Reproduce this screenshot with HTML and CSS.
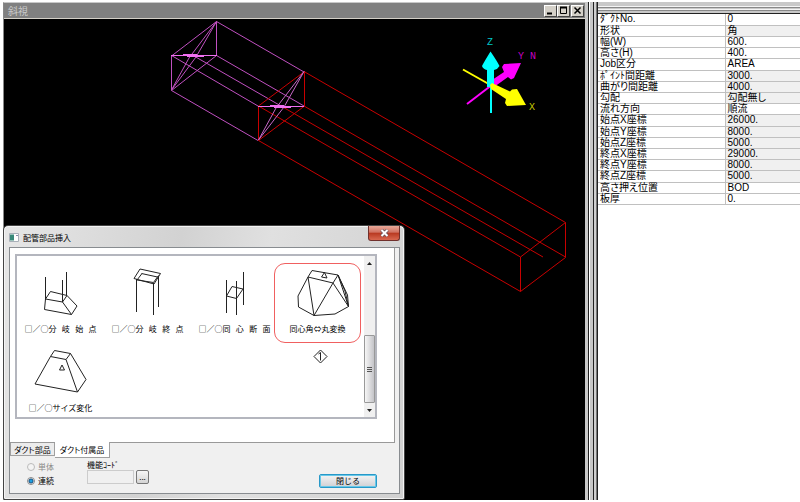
FILE: index.html
```html
<!DOCTYPE html>
<html lang="ja">
<head>
<meta charset="utf-8">
<title>斜視</title>
<link rel="stylesheet" href="styles.css">
</head>
<body>
<main class="workspace">
  <section class="view">
    <header class="view-bar">
      <h1 class="view-title">斜視</h1>
      <div class="view-buttons">
        <button class="win-button" type="button" aria-label="最小化"><svg width="9" height="9" viewBox="0 0 9 9"><path d="M1 7.500h5" stroke="#000" stroke-width="2"/></svg></button>
        <button class="win-button" type="button" aria-label="最大化"><svg width="9" height="9" viewBox="0 0 9 9"><path d="M1.500 1v6.500h6V1" fill="none" stroke="#000"/><path d="M1 1.500h7" stroke="#000" stroke-width="2"/></svg></button>
        <button class="win-button win-close" type="button" aria-label="閉じる"><svg width="9" height="9" viewBox="0 0 9 9"><path d="M1.500 1.500l6 6M7.500 1.500l-6 6" stroke="#000" stroke-width="1.500"/></svg></button>
      </div>
    </header>
    <div class="canvas">
      <svg class="scene" width="580" height="300" viewBox="4 19 580 300">
        <g fill="none" stroke="#c050c0">
          <path d="M171.500 90.500V56L216.500 21.500V55.500L171.500 90.500L258 140.500"/>
          <path d="M171.500 55.500L258 106M216.500 21.500L304 72M216.500 55.500L304 106M194 56L281 106"/>
          <path d="M171.500 90L189 58L216.500 21.500L196 57Z"/>
        </g>
        <g fill="none" stroke="#c80000">
          <path d="M258.500 140.500V106L304.500 71.500V106L258.500 140.500L520.500 291.500"/>
          <path d="M304 71.500L565.500 222.500M304 106L565.500 257M258.500 106L520.500 257M281 106L543 257"/>
          <path d="M520.500 291.500V257L565.500 222.500V257.500Z"/>
        </g>
        <path d="M258.500 140L276 108L304 71.500L284 107Z" fill="none" stroke="#c868c8"/>
        <g stroke="#f070f0" fill="none">
          <path d="M171 55.500H217M183 54.500h14M187 56.500h17"/>
          <path d="M258 106.500H304M270 105.500h14M274 107.500h17"/>
        </g>
        <g stroke-width="2">
          <path d="M490.500 86L467 104" stroke="#f0f"/>
          <path d="M491 86V113" stroke="#0ff"/>
          <path d="M490.500 85L463 69.500" stroke="#ff0"/>
        </g>
        <path d="M489 82L504 72L502 67L504 64L521 63L514 78L511 79.500L508 77L494 87Z" fill="#f0f"/>
        <path d="M487 87V70Q483 69 482 66Q484 62 490.500 51.500Q497 61 499.500 66Q498 69 494 70V87Z" fill="#0ff"/>
        <path d="M490 85L492 83L510 91.500L512 89.500L517 89L526 105L507 106L505 103L506 99L491 89Z" fill="#ff0"/>
        <g class="axis-text">
          <text x="487" y="45" fill="#00c8c8">Z</text>
          <text x="518" y="59" fill="#c800c8">Y N</text>
          <text x="529" y="110" fill="#c8c800">X</text>
        </g>
      </svg>
    </div>

    <section class="dialog" role="dialog" aria-labelledby="dialog-title">
      <header class="dialog-bar">
        <svg class="dialog-icon" width="10" height="9" viewBox="0 0 10 9"><path d="M.5.500h9v8h-9z" fill="#fff" stroke="#a8b0b8"/><path d="M1 1.500h4v6H1z" fill="#388878"/><path d="M7 2.500h2" stroke="#88a"/></svg>
        <h2 class="dialog-title" id="dialog-title">配管部品挿入</h2>
        <button class="dialog-close" type="button" aria-label="閉じる"><svg width="9" height="8" viewBox="0 0 9 8"><path d="M1.500 1l6 6M7.500 1l-6 6" stroke="#665058" stroke-width="3.500"/><path d="M1.500 1l6 6M7.500 1l-6 6" stroke="#fff" stroke-width="2"/></svg></button>
      </header>
      <div class="dialog-body">
        <div class="page">
          <div class="list">
            <div class="parts">
              <button class="part" type="button">
                <svg width="80" height="60" viewBox="20 264 80 60"><path d="M44.500 277V299M44.500 299L43.500 309.500L70.500 314.500L76 306L66 295.500L49.500 291.500L44.500 299L61.500 302L66 295.500M61.500 302L70.500 314.500M65.500 272V295M61.500 280V302"/></svg>
                <span>□／○分&nbsp;&nbsp;&nbsp;岐&nbsp;&nbsp;&nbsp;始&nbsp;&nbsp;&nbsp;点</span>
              </button>
              <button class="part" type="button">
                <svg width="80" height="60" viewBox="108 264 80 60"><path d="M140 269L160.500 273.500L154 284L134 278.500ZM141.500 273.500L157.500 277M142 273.500L137 280L153.500 282.500L158.500 275.500M136.500 279V312M153.500 283V315M158.500 276V307"/></svg>
                <span>□／○分&nbsp;&nbsp;&nbsp;岐&nbsp;&nbsp;&nbsp;終&nbsp;&nbsp;&nbsp;点</span>
              </button>
              <button class="part" type="button">
                <svg width="80" height="60" viewBox="195 264 80 60"><path d="M226.500 280V313M243.500 272V305M236.500 281V315M226.500 296L232 286.500L243 289L236.500 298.500Z"/></svg>
                <span>□／○同&nbsp;&nbsp;&nbsp;心&nbsp;&nbsp;&nbsp;断&nbsp;&nbsp;&nbsp;面</span>
              </button>
              <button class="part part-marked" type="button">
                <svg width="80" height="60" viewBox="277 264 80 60"><path d="M311 270.500L337 275L332 283L307 277ZM307 277L297 296L297.500 307L313 315.500L334 314L347.500 306.500L346.500 295L337 275M307 277L313 315.500L332 283L347.500 306.500L337 275L344 291L347.500 306.500M320.500 277L323.500 272.500L326 278Z"/></svg>
                <span>同心角⇔丸変換</span>
              </button>
              <button class="part" type="button">
                <svg width="80" height="60" viewBox="20 342 80 60"><path d="M53.500 349.500L69.500 352.500L65 358.500L49.500 355.500ZM49.500 355.500L34 383L76.500 391L85 378.500L69.500 352.500M65 358.500L76.500 391M58.500 369L61 364L63.500 369Z"/></svg>
                <span>□／○サイズ変化</span>
              </button>
            </div>
            <svg class="cursor-mark" width="15" height="15" viewBox="0 0 15 15"><path d="M7.500 1L14 7.500L7.500 14L1 7.500Z" fill="#fff" stroke="#222"/><path d="M5.500 5L7.500 3.500V11.500" fill="none" stroke="#222"/></svg>
            <div class="scroll" aria-hidden="true">
              <svg width="11" height="14" viewBox="0 0 11 14"><path d="M3 9L5.500 6L8 9Z" fill="#222"/></svg>
              <div class="thumb"><i></i><i></i><i></i></div>
              <svg width="11" height="14" viewBox="0 0 11 14"><path d="M3 6L5.500 9L8 6Z" fill="#222"/></svg>
            </div>
          </div>
        </div>
        <div class="tabs" role="tablist">
          <button class="tab" type="button" role="tab" aria-selected="false">ダクト部品</button>
          <button class="tab tab-active" type="button" role="tab" aria-selected="true">ダクト付属品</button>
        </div>
        <form class="options">
          <div class="modes">
            <label class="mode mode-off"><input type="radio" name="mode" disabled>単体</label>
            <label class="mode"><input type="radio" name="mode" checked>連続</label>
          </div>
          <div class="code">
            <label for="code">機能ｺｰﾄﾞ</label>
            <div class="code-row">
              <input id="code" type="text" disabled>
              <button class="browse" type="button" aria-label="参照">...</button>
            </div>
          </div>
          <button class="close-button" type="button">閉じる</button>
        </form>
      </div>
    </section>
  </section>

  <aside class="side">
    <div class="grip"></div>
    <table class="props">
      <tbody>
        <tr><th scope="row">ﾀﾞｸﾄNo.</th><td>0</td></tr>
        <tr><th scope="row">形状</th><td class="locked">角</td></tr>
        <tr><th scope="row">幅(W)</th><td>600.</td></tr>
        <tr><th scope="row">高さ(H)</th><td>400.</td></tr>
        <tr><th scope="row">Job区分</th><td>AREA</td></tr>
        <tr><th scope="row">ﾎﾟｲﾝﾄ間距離</th><td class="locked">3000.</td></tr>
        <tr><th scope="row">曲がり間距離</th><td class="locked">4000.</td></tr>
        <tr><th scope="row">勾配</th><td class="locked">勾配無し</td></tr>
        <tr><th scope="row">流れ方向</th><td>順流</td></tr>
        <tr><th scope="row">始点X座標</th><td class="locked">26000.</td></tr>
        <tr><th scope="row">始点Y座標</th><td class="locked">8000.</td></tr>
        <tr><th scope="row">始点Z座標</th><td class="locked">5000.</td></tr>
        <tr><th scope="row">終点X座標</th><td class="locked">29000.</td></tr>
        <tr><th scope="row">終点Y座標</th><td class="locked">8000.</td></tr>
        <tr><th scope="row">終点Z座標</th><td class="locked">5000.</td></tr>
        <tr><th scope="row">高さ押え位置</th><td>BOD</td></tr>
        <tr><th scope="row">板厚</th><td>0.</td></tr>
      </tbody>
    </table>
  </aside>
</main>
</body>
</html>
```

FILE: styles.css
```css
* {
  box-sizing: border-box;
}

body {
  margin: 0;
  background: #fff;
  color: #000;
  font-family: "Noto Sans CJK JP", sans-serif;
  font-size: 8px;
  line-height: 10px;
}

button,
input {
  font: inherit;
  color: inherit;
  margin: 0;
  padding: 0;
}

svg {
  display: block;
}

.workspace {
  display: flex;
  height: 100vh;
  padding: 2px 0 2px 3px;
}

.view {
  position: relative;
  flex: 1;
  display: flex;
  flex-direction: column;
  border-top: 1px solid #c8c8c8;
  border-left: 1px solid #888;
  border-right: 2px solid #c8c8c8;
  min-width: 0;
}

.view-bar {
  display: flex;
  align-items: center;
  justify-content: space-between;
  height: 16px;
  padding: 0 1px 0 4px;
  background: #808080;
  border-bottom: 1px solid #d4d0c8;
}

.view-title {
  margin: 0;
  color: #c8c8c8;
  font-size: 10px;
  font-weight: 400;
  line-height: 12px;
}

.view-buttons {
  display: flex;
}

.win-button {
  display: grid;
  place-items: center;
  width: 13px;
  height: 12px;
  background: #d4d0c8;
  border: 1px solid;
  border-color: #fff #404040 #404040 #fff;
}

.win-close {
  margin-left: 1px;
}

.canvas {
  flex: 1;
  min-height: 0;
  overflow: hidden;
  background: #000;
}

.axis-text {
  font-family: "Liberation Mono", monospace;
  font-size: 10px;
}

.dialog {
  position: absolute;
  left: -1px;
  bottom: 0;
  width: 402px;
  padding: 0 4px 5px 5px;
  background: linear-gradient(100deg, #e6e6e6, #d2d2d2 40%, #e0e0e0 60%, #d0d0d0);
  border: 1px solid #444;
  border-radius: 5px 5px 2px 2px;
  box-shadow: inset 0 0 0 1px #f4f4f4;
}

.dialog-bar {
  display: flex;
  align-items: flex-start;
  height: 21px;
}

.dialog-icon {
  margin: 7px 4px 0 0;
}

.dialog-title {
  flex: 1;
  margin: 6px 0 0;
  font-size: 8px;
  font-weight: 400;
  line-height: 12px;
}

.dialog-close {
  display: grid;
  place-items: center;
  width: 32px;
  height: 15px;
  background: linear-gradient(#e8a898, #d07060 45%, #b83820 50%, #d86850);
  border: 1px solid #70302c;
  border-top: 0;
  border-radius: 0 0 3px 3px;
}

.dialog-body {
  background: #f0f0f0;
  border: 1px solid #888c90;
}

.page {
  padding: 6px 17px 23px 5px;
  margin-right: 4px;
  background: #fff;
  border-right: 1px solid #999;
  border-bottom: 1px solid #999;
}

.list {
  position: relative;
  display: flex;
  height: 165px;
  border: 2px solid #b4b6be;
}

.parts {
  flex: 1;
  display: grid;
  grid-template-columns: 87px 87px 83px 1fr;
  grid-template-rows: 79px 1fr;
  padding-top: 7px;
}

.part {
  display: flex;
  flex-direction: column;
  align-items: center;
  justify-self: start;
  width: 87px;
  height: 80px;
  background: none;
  border: 1px solid transparent;
  white-space: nowrap;
}

.part svg {
  fill: none;
  stroke: #222;
}

.part-marked {
  border-color: #f06060;
  border-radius: 11px;
}

.cursor-mark {
  position: absolute;
  left: 296px;
  top: 93px;
}

.scroll {
  display: flex;
  flex-direction: column;
  justify-content: space-between;
  width: 11px;
  background: #f0f0f0;
}

.thumb {
  display: flex;
  flex-direction: column;
  align-items: center;
  justify-content: center;
  gap: 1px;
  height: 68px;
  margin-top: auto;
  background: linear-gradient(90deg, #f6f6f6, #c4c4c8);
  border: 1px solid #999;
  border-radius: 1px;
}

.thumb i {
  width: 5px;
  height: 1px;
  background: #555;
}

.tabs {
  display: flex;
  align-items: flex-start;
}

.tab {
  height: 13px;
  padding: 0 3px;
  background: #ececec;
  border: 1px solid #a0a0a0;
  border-top: 0;
  line-height: 11px;
  font-feature-settings: "palt";
}

.tab-active {
  height: 16px;
  padding: 0 5px;
  margin-top: -1px;
  background: #fff;
  border-left: 0;
  line-height: 16px;
}

.options {
  display: flex;
  align-items: flex-start;
  height: 35px;
  padding: 2px 22px 0 17px;
}

.modes {
  display: grid;
  gap: 4px;
  width: 60px;
  padding-top: 2px;
}

.mode {
  display: flex;
  align-items: center;
  gap: 3px;
}

.mode input {
  appearance: none;
  width: 8px;
  height: 8px;
  background: #fff;
  border: 1px solid #888;
  border-radius: 50%;
}

.mode input:checked {
  background: radial-gradient(circle, #20a0e0 1px, #185080 2px, #fff 3px);
}

.mode-off {
  color: #888;
}

.mode-off input {
  background: #f4f4f4;
  border-color: #bbb;
}

.code-row {
  display: flex;
  gap: 2px;
}

.code input {
  width: 47px;
  height: 14px;
  background: #f0f0f0;
  border: 1px solid #ccc;
}

.browse {
  width: 13px;
  height: 14px;
  background: linear-gradient(#f6f6f6, #d4d4d4);
  border: 1px solid #777;
  border-radius: 2px;
  line-height: 8px;
}

.close-button {
  width: 58px;
  height: 14px;
  margin: 14px 0 0 auto;
  background: linear-gradient(#f4f4f4, #d0d0d4);
  border: 1px solid #2898c8;
  border-radius: 2px;
  box-shadow: inset 0 0 0 1px #68c8e8;
  line-height: 12px;
}

.side {
  flex: 0 0 213px;
  border-left: 11px solid;
  border-image: linear-gradient(90deg, #c8c8c8 0 1px, #222 1px 2px, #fff 2px 3px, #c8c8c8 3px 6px, #222 6px 7px, #d0d0d0 7px 9px, #777 9px 10px, #222 10px) 0 0 0 11;
}

.grip {
  height: 12px;
  background: linear-gradient(#c8c8c8 0 4px, #f4f4f4 4px 5px, #888 5px 6px, #c8c8c8 6px 7px, #f4f4f4 7px 8px, #888 8px 9px, #c8c8c8 9px 11px, #222 11px);
}

.props {
  width: 100%;
  height: 191px;
  border-collapse: collapse;
  font-family: "Liberation Sans", "Noto Sans CJK JP", sans-serif;
  font-size: 10px;
  line-height: 10px;
  font-feature-settings: "palt";
}

.props th,
.props td {
  height: 11px;
  padding: 0 2px;
  border-bottom: 1px solid #c0c0c0;
  font-weight: 400;
  text-align: left;
  white-space: nowrap;
}

.props th {
  width: 127px;
  border-right: 1px solid #c0c0c0;
}

.props .locked {
  background: #f0f0f0;
}
```
